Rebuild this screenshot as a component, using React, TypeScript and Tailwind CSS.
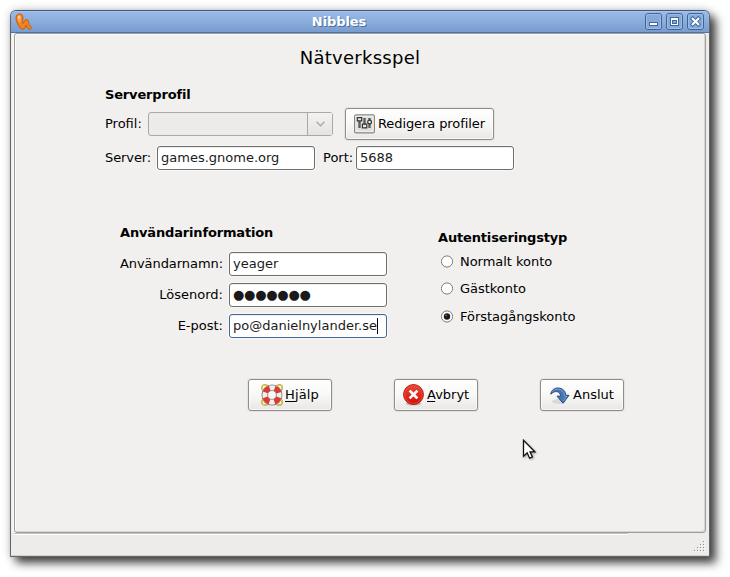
import React from "react";

const fieldBase =
  "flex h-[24px] w-[158px] shrink-0 items-center rounded-[3px] border bg-white pl-[3px] leading-[20px] text-[#1a1a1a] whitespace-pre shadow-[inset_0_1px_0_#eeeeee,0_0_0_1px_#f8f8f7]";

function Field({ focused, children }: { focused?: boolean; children: React.ReactNode }) {
  return (
    <div
      className={
        fieldBase +
        (focused ? " border-[#456696] shadow-[inset_0_0_0_1px_#c3d3e8,0_0_0_1px_#f8f8f7]" : " border-[#6f6d6b]")
      }
    >
      {children}
    </div>
  );
}

function PushButton({ className, children }: { className: string; children: React.ReactNode }) {
  return (
    <button
      className={
        "flex h-[32px] shrink-0 items-center rounded-[3px] border border-[#8f8d8a] bg-linear-to-b from-white via-[#f8f8f7] to-[#e8e7e5] whitespace-nowrap shadow-[inset_0_0_0_1px_#ffffffaa,0_0_0_1px_#e4e3e1] " +
        className
      }
    >
      {children}
    </button>
  );
}

function Heading({ children }: { children: React.ReactNode }) {
  return <h3 className="h-[20px] pt-px leading-[20px] font-bold tracking-[-0.16px]">{children}</h3>;
}

function WindowButton({ children }: { children: React.ReactNode }) {
  return (
    <svg width="17" height="17" viewBox="0 0 17 17" className="shrink-0">
      <rect x="0.5" y="0.5" width="16" height="16" rx="2.5" fill="#85a9db" stroke="#41648f" />
      <rect x="1.5" y="1.5" width="14" height="14" rx="1.5" fill="none" stroke="#9dbce6" />
      {children}
    </svg>
  );
}

function Radio({ checked, label, className }: { checked?: boolean; label: string; className: string }) {
  return (
    <div className={"flex h-[20px] items-center " + className}>
      <svg width="13" height="13" viewBox="0 0 13 13" className="mb-px shrink-0">
        <circle cx="6" cy="6.5" r="5.6" fill="#fff" stroke="#7d7b79" />
        {checked && <circle cx="6" cy="6.5" r="3.2" fill="#1c1c1c" />}
        {checked && <circle cx="5" cy="5.3" r="0.9" fill="#777" />}
      </svg>
      <span className="ml-[6px] tracking-[-0.03px]">{label}</span>
    </div>
  );
}

function WormIcon() {
  return (
    <svg width="18" height="18" viewBox="0 0 18 18" className="shrink-0">
      <path
        d="M1 5.2C1 2.4 2.6 0.9 4.7 0.9C7.2 0.9 8 2.8 7.9 5.2C7.8 7.6 7.4 9.2 8 10.6C9 9.6 9.4 6.6 11.6 6.6C14.6 6.6 13 11.6 14.8 12.8C16 13.2 16.9 14 16.4 15.3C15.6 16.6 12.8 16 11.9 14.3C11.4 13.2 11.6 12.4 11.2 12C10.4 13.4 10 16.2 7.8 16.3C5.2 16.3 1 9.6 1 5.2Z"
        fill="#f4821b"
        stroke="#c75b0a"
      />
      <path d="M2.4 5.4C2.4 3.4 3.2 2.2 4.6 2.2C6.1 2.3 6.2 4.2 6 6.2C5.8 8.2 5.4 9.4 5 10C3.6 8.8 2.4 7 2.4 5.4Z" fill="#fba552" />
      <ellipse cx="3.9" cy="4.3" rx="1.1" ry="1.7" fill="#fdca94" />
    </svg>
  );
}

function SlidersIcon() {
  return (
    <svg width="21" height="20" viewBox="0 0 21 20" className="shrink-0">
      <rect x="0.6" y="0.9" width="19.8" height="18" rx="1.5" fill="#e9eae8" stroke="#858783" strokeWidth="1.2" />
      <rect x="2" y="2.3" width="17" height="15" fill="#dfe0dd" stroke="#f3f3f2" strokeWidth="0.8" />
      <g stroke="#5b5e5b" strokeWidth="2.4">
        <path d="M5.5 4v10M10.5 4v10M15.5 4v10" />
      </g>
      <g fill="#e6e7e5" stroke="#343634" strokeWidth="1.2">
        <path d="M3.3 3.7h4.4v3.2H3.3zM8.4 10.2h4.4v3.6H8.4z" />
        <circle cx="15.6" cy="8" r="1.9" />
      </g>
    </svg>
  );
}

function LifebuoyIcon() {
  return (
    <svg width="22" height="22" viewBox="0 0 22 22" className="shrink-0">
      <g fill="none" stroke="#c9a227" strokeWidth="1.5">
        <circle cx="3.8" cy="3.8" r="3" />
        <circle cx="18.2" cy="3.8" r="3" />
        <circle cx="3.8" cy="18.2" r="3" />
        <circle cx="18.2" cy="18.2" r="3" />
      </g>
      <g fill="none" stroke="#f0d860" strokeWidth="0.6">
        <circle cx="3.8" cy="3.8" r="3" />
        <circle cx="18.2" cy="3.8" r="3" />
        <circle cx="3.8" cy="18.2" r="3" />
        <circle cx="18.2" cy="18.2" r="3" />
      </g>
      <circle cx="11" cy="11" r="7.2" fill="none" stroke="#7f817d" strokeWidth="6.6" />
      <circle cx="11" cy="11" r="7.2" fill="none" stroke="#efefee" strokeWidth="4.9" />
      <circle
        cx="11"
        cy="11"
        r="7.2"
        fill="none"
        stroke="#dd3a30"
        strokeWidth="5.2"
        strokeDasharray="6.3 5.01"
        transform="rotate(20 11 11)"
      />
    </svg>
  );
}

function CancelIcon() {
  return (
    <svg width="22" height="22" viewBox="0 0 22 22" className="shrink-0">
      <defs>
        <linearGradient id="cancelRed" x1="0" y1="0" x2="0" y2="1">
          <stop offset="0" stopColor="#ef4934" />
          <stop offset="1" stopColor="#d40b06" />
        </linearGradient>
      </defs>
      <ellipse cx="10.5" cy="19.6" rx="8" ry="2" fill="#bdbbb9" />
      <circle cx="10.5" cy="10.5" r="9.9" fill="url(#cancelRed)" stroke="#a80c05" />
      <circle cx="10.5" cy="10.5" r="8.9" fill="none" stroke="#ea5345" strokeWidth="0.8" />
      <path d="M7.5 7.5l6 6M13.5 7.5l-6 6" stroke="#fff" strokeWidth="2.6" strokeLinecap="square" />
    </svg>
  );
}

function ConnectIcon() {
  return (
    <svg width="20" height="18" viewBox="0 0 20 18" className="mt-px shrink-0">
      <ellipse cx="9" cy="14.5" rx="7" ry="2.5" fill="#d9d8d6" />
      <path
        d="M0.8 7.2C1.2 3 4.6 0.9 8.2 1C12.7 1.2 15.6 4.1 15.8 8.3H19L13 16.2L7 9.2H10.5C10.4 6.4 9 4.9 6.7 4.6C4.7 4.4 2.9 5.2 0.8 7.2Z"
        fill="#4677b3"
        stroke="#244b80"
      />
      <path d="M2.3 4.9C3.8 2.6 6.3 1.8 8.6 2.2C12.2 2.6 14.6 5 14.8 9.2H16.8L13 14.2" fill="none" stroke="#83a9d4" strokeWidth="0.8" />
    </svg>
  );
}

const gripDots = [
  [9, 0],
  [6, 3], [9, 3],
  [3, 6], [6, 6], [9, 6],
  [0, 9], [3, 9], [6, 9], [9, 9],
];

export default function App() {
  return (
    <div className="relative h-[577px] w-[730px] overflow-hidden bg-white p-[10px] font-['DejaVu_Sans',sans-serif] text-[13px] text-black">
      <div className="flex h-[547px] w-[700px] flex-col overflow-hidden rounded-t-[6px] border border-[#666563] border-t-[#3c5a80] bg-[#edeceb] shadow-[6px_6px_10px_#000000b8,0_0_9px_#00000038]">
        <header className="flex h-[22px] shrink-0 items-center border-b border-[#4a74ad] bg-linear-to-b from-[#9bbbe6] via-[#8aaddd] to-[#789cce] pr-[5px] pl-[4px] shadow-[inset_0_1px_0_#a8c4ea]">
          <WormIcon />
          <h1 className="flex-1 text-center text-[13px] leading-[20px] font-bold tracking-[-0.1px] text-white [text-shadow:1px_1px_0_#4c6f9f]">
            Nibbles
          </h1>
          <div className="flex gap-[4px]">
            <WindowButton>
              <rect x="4.5" y="9.5" width="8" height="3" fill="#fff" stroke="#41699e" />
            </WindowButton>
            <WindowButton>
              <rect x="4.5" y="4.5" width="8" height="8" fill="#fff" stroke="#41699e" />
              <rect x="6.5" y="7.5" width="4" height="3" fill="#85a9db" stroke="#41699e" />
            </WindowButton>
            <WindowButton>
              <path d="M5.7 5.7l5.6 5.6M11.3 5.7l-5.6 5.6" stroke="#41699e" strokeWidth="4" strokeLinecap="square" />
              <path d="M5.7 5.7l5.6 5.6M11.3 5.7l-5.6 5.6" stroke="#fff" strokeWidth="2.1" strokeLinecap="square" />
            </WindowButton>
          </div>
        </header>

        <main className="ml-[3px] h-[500px] w-[692px] shrink-0 rounded-[3px] border border-[#9f9d9b] bg-[#f1f0ee] pt-[11px] shadow-[inset_1px_1px_0_#fbfbfa,inset_-1px_-1px_0_#d6d5d3,-2px_0_0_#f6f6f5]">
          <h2 className="h-[24px] pt-px text-center text-[18px] leading-[24px] tracking-[0.26px]">Nätverksspel</h2>

          <section className="mt-[15px] pl-[90px]">
            <Heading>Serverprofil</Heading>
            <div className="mt-[4px] flex h-[32px] items-center">
              <span className="w-[43px]">Profil:</span>
              <div className="flex h-[24px] w-[185px] rounded-[3px] border border-[#aaa8a6] bg-[#ecebe9]">
                <div className="flex-1 border-r border-[#aaa8a6]" />
                <div className="flex w-[24px] items-center justify-center bg-linear-to-b from-[#f3f2f1] to-[#e5e4e2]">
                  <svg width="9" height="6" viewBox="0 0 9 6">
                    <path d="M0.5 0.8L4.5 4.8L8.5 0.8" fill="none" stroke="#a9a7a5" strokeWidth="1.3" />
                  </svg>
                </div>
              </div>
              <PushButton className="ml-[12px] w-[149px] pl-[8px]">
                <SlidersIcon />
                <span className="ml-[3px] tracking-[-0.09px]">Redigera profiler</span>
              </PushButton>
            </div>
            <div className="mt-[6px] flex h-[24px] items-center">
              <span className="w-[52px] tracking-[-0.1px]">Server:</span>
              <Field>games.gnome.org</Field>
              <span className="ml-[8px] w-[33px] whitespace-nowrap">Port:</span>
              <Field>5688</Field>
            </div>
          </section>

          <div className="mt-[52px] flex h-[116px] pl-[105px]">
            <section className="w-[267px]">
              <Heading>Användarinformation</Heading>
              <div className="mt-[10px] flex flex-col gap-[7px]">
                <div className="flex items-center justify-end gap-[6px]">
                  <span className="tracking-[-0.06px]">Användarnamn:</span>
                  <Field>yeager</Field>
                </div>
                <div className="flex items-center justify-end gap-[6px]">
                  <span>Lösenord:</span>
                  <Field>
                    <span className="tracking-[-0.26px]">●●●●●●●</span>
                  </Field>
                </div>
                <div className="flex items-center justify-end gap-[6px]">
                  <span>E-post:</span>
                  <Field focused>
                    po@danielnylander.se
                    <span className="h-[16px] w-px bg-black" />
                  </Field>
                </div>
              </div>
            </section>
            <section className="ml-[51px] pt-[5px]">
              <Heading>Autentiseringstyp</Heading>
              <Radio className="mt-[5px] ml-[3px]" label="Normalt konto" />
              <Radio className="mt-[7px] ml-[3px]" label="Gästkonto" />
              <Radio className="mt-[8px] ml-[3px]" label="Förstagångskonto" checked />
            </section>
          </div>

          <div className="mt-[41px] flex gap-[62px] pl-[233px]">
            <PushButton className="w-[84px] pl-[12px]">
              <LifebuoyIcon />
              <span className="ml-[2px] tracking-[0.15px]">
                <span className="underline underline-offset-2">H</span>jälp
              </span>
            </PushButton>
            <PushButton className="w-[84px] pl-[8px]">
              <CancelIcon />
              <span className="ml-[2px]">
                <span className="underline underline-offset-2">A</span>vbryt
              </span>
            </PushButton>
            <PushButton className="w-[84px] pl-[9px]">
              <ConnectIcon />
              <span className="ml-[3px]">Anslut</span>
            </PushButton>
          </div>
        </main>

        <footer className="flex flex-1 items-start justify-between border-b border-[#d2d1cf] pr-[3px] pl-[3px]">
          <div className="h-[2px] w-[614px] border-t border-[#c5c3c1] bg-white" />
          <svg width="12" height="12" viewBox="0 0 12 12" className="mt-[8px]">
            {gripDots.map(([x, y]) => (
              <g key={x + "-" + y}>
                <rect x={x + 1} y={y + 1} width="1" height="1" fill="#fff" />
                <rect x={x} y={y} width="1" height="1" fill="#8e8c8a" />
              </g>
            ))}
          </svg>
        </footer>
      </div>

      <svg width="14" height="22" viewBox="0 0 14 22" className="absolute top-[439px] left-[522px] drop-shadow-[1px_1px_1px_#00000055]">
        <path
          d="M1.5 1.3V17.2L5.2 13.8L7.6 19.2L10.4 18L8 12.8H12.8Z"
          fill="#fff"
          stroke="#111"
          strokeWidth="1.3"
        />
      </svg>
    </div>
  );
}
